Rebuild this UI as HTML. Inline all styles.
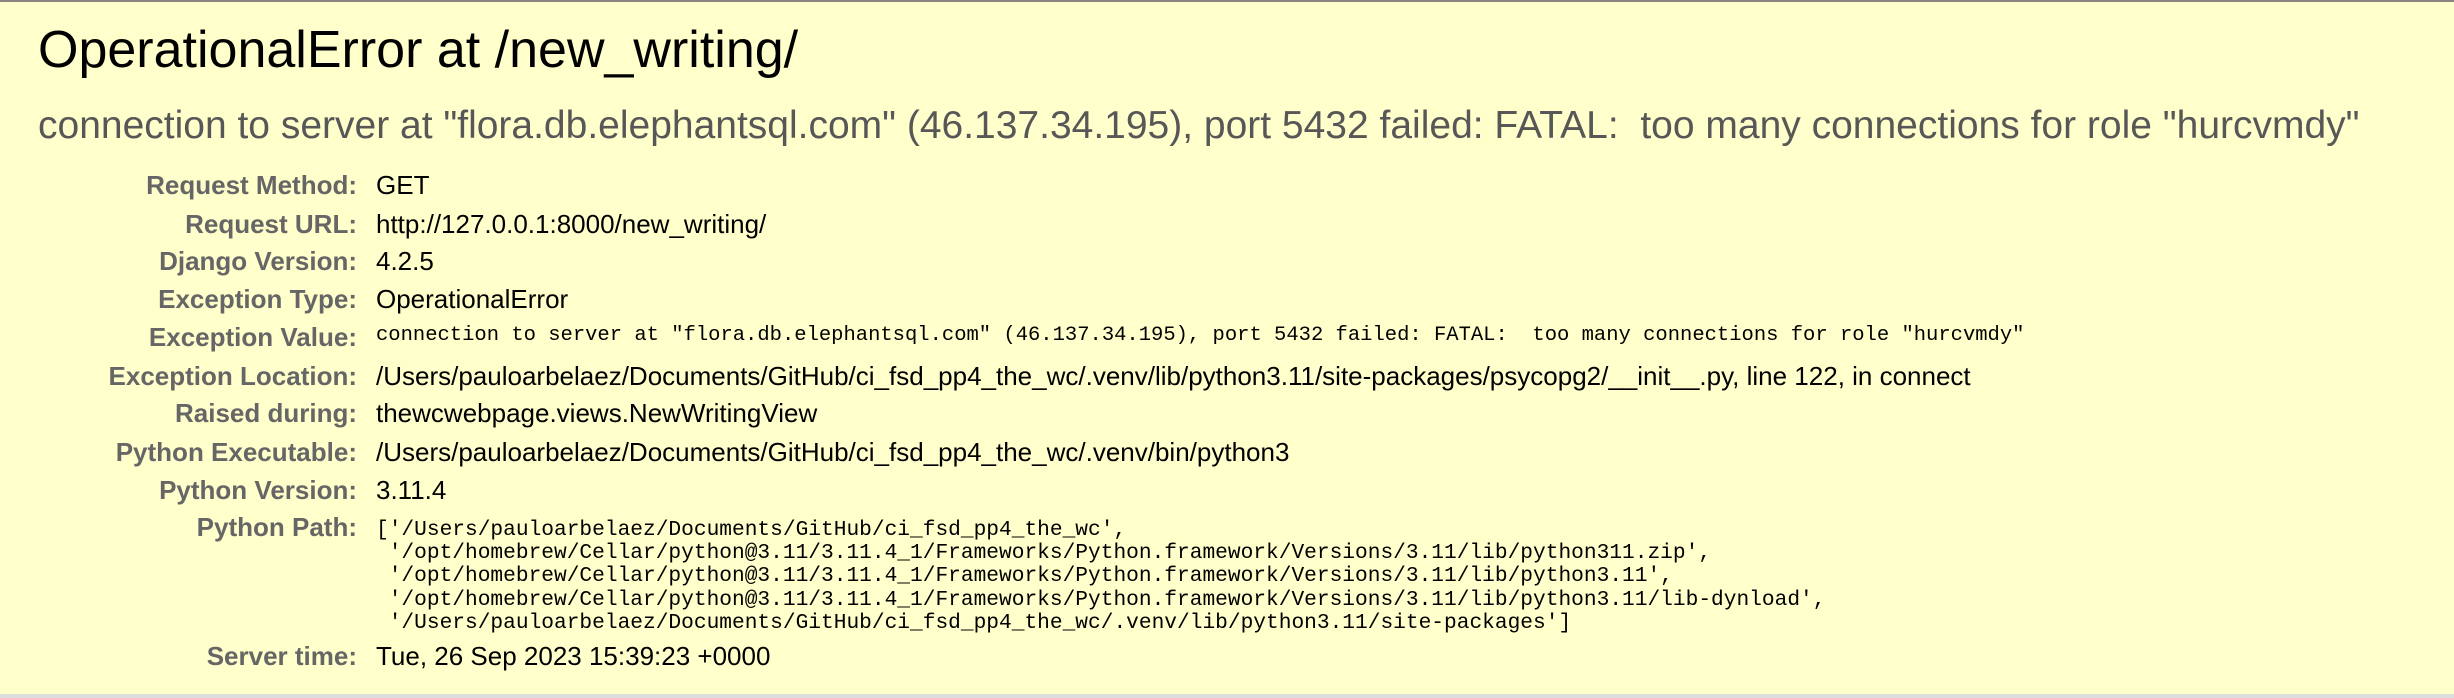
<!DOCTYPE html>
<html><head><meta charset="utf-8"><style>
html,body{margin:0;padding:0;}
body{width:2454px;height:698px;background:#ffffcc;position:relative;overflow:hidden;font-family:"Liberation Sans",Arial,sans-serif;}
.top{position:absolute;left:0;top:0;width:2454px;height:2px;background:#8a8484;}
.bot{position:absolute;left:0;top:694px;width:2454px;height:4px;background:#dddddd;}
.t{position:absolute;white-space:pre;line-height:1;}
h1{position:absolute;left:38px;top:24px;margin:0;font-weight:normal;font-size:52px;line-height:1;color:#000;white-space:pre;}
.sub{left:38px;top:106px;font-size:39px;color:#575757;}
.l{right:2097px;font-size:26px;font-weight:bold;color:#666;text-align:right;}
.v{left:376px;font-size:26px;color:#000;}
.m{left:376px;font-family:"Liberation Mono","Courier New",monospace;font-size:20.5px;color:#000;}
.p{font-size:21.2px;}
</style></head><body>
<div class="top"></div>
<h1>OperationalError at /new_writing/</h1>
<div class="t sub">connection to server at "flora.db.elephantsql.com" (46.137.34.195), port 5432 failed: FATAL:  too many connections for role "hurcvmdy"</div>

<div class="t l" style="top:172px">Request Method:</div><div class="t v" style="top:172px">GET</div>
<div class="t l" style="top:211px">Request URL:</div><div class="t v" style="top:211px">http://127.0.0.1:8000/new_writing/</div>
<div class="t l" style="top:248px">Django Version:</div><div class="t v" style="top:248px">4.2.5</div>
<div class="t l" style="top:286px">Exception Type:</div><div class="t v" style="top:286px">OperationalError</div>
<div class="t l" style="top:324px">Exception Value:</div><div class="t m" style="top:326px">connection to server at "flora.db.elephantsql.com" (46.137.34.195), port 5432 failed: FATAL:  too many connections for role "hurcvmdy"</div>
<div class="t l" style="top:363px">Exception Location:</div><div class="t v" style="top:363px">/Users/pauloarbelaez/Documents/GitHub/ci_fsd_pp4_the_wc/.venv/lib/python3.11/site-packages/psycopg2/__init__.py, line 122, in connect</div>
<div class="t l" style="top:400px">Raised during:</div><div class="t v" style="top:400px">thewcwebpage.views.NewWritingView</div>
<div class="t l" style="top:439px">Python Executable:</div><div class="t v" style="top:439px">/Users/pauloarbelaez/Documents/GitHub/ci_fsd_pp4_the_wc/.venv/bin/python3</div>
<div class="t l" style="top:477px">Python Version:</div><div class="t v" style="top:477px">3.11.4</div>
<div class="t l" style="top:514px">Python Path:</div>
<div class="t m p" style="top:520px">['/Users/pauloarbelaez/Documents/GitHub/ci_fsd_pp4_the_wc',</div>
<div class="t m p" style="top:543px"> '/opt/homebrew/Cellar/python@3.11/3.11.4_1/Frameworks/Python.framework/Versions/3.11/lib/python311.zip',</div>
<div class="t m p" style="top:566px"> '/opt/homebrew/Cellar/python@3.11/3.11.4_1/Frameworks/Python.framework/Versions/3.11/lib/python3.11',</div>
<div class="t m p" style="top:590px"> '/opt/homebrew/Cellar/python@3.11/3.11.4_1/Frameworks/Python.framework/Versions/3.11/lib/python3.11/lib-dynload',</div>
<div class="t m p" style="top:613px"> '/Users/pauloarbelaez/Documents/GitHub/ci_fsd_pp4_the_wc/.venv/lib/python3.11/site-packages']</div>
<div class="t l" style="top:643px">Server time:</div><div class="t v" style="top:643px">Tue, 26 Sep 2023 15:39:23 +0000</div>
<div class="bot"></div>
</body></html>
